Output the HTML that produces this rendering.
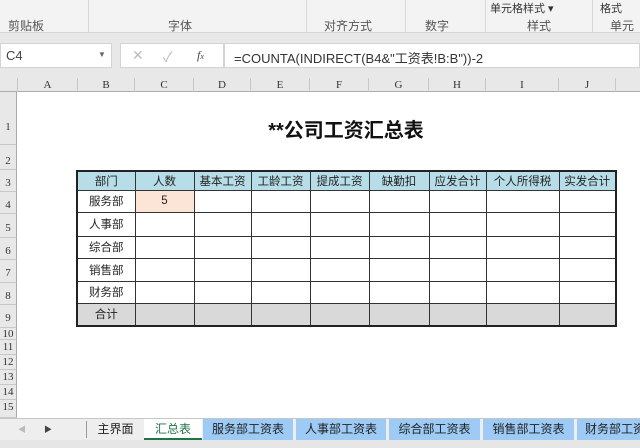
<!DOCTYPE html><html><head><meta charset="utf-8"><style>
*{margin:0;padding:0;box-sizing:border-box}
body{width:640px;height:448px;overflow:hidden;background:#fff;font-family:"Liberation Sans","Noto Sans CJK SC",sans-serif;position:relative}
.a{position:absolute}
.rib{left:0;top:0;width:640px;height:33px;background:#f3f3f3;border-bottom:1px solid #d6d6d6}
.rl{top:17px;font-size:12px;color:#555}
.band{left:0;top:33px;width:640px;height:45px;background:#e8e8e8}
.box{background:#fff;border:1px solid #d4d4d4}
.colh{left:0;top:78px;width:640px;height:14px;background:#e8e8e8;border-bottom:1px solid #ababab}
.ch{top:78px;height:14px;font:11px "Liberation Serif",serif;color:#333;text-align:center;line-height:14px;border-right:1px solid #c8c8c8}
.rh{left:0;width:17px;background:#e8e8e8;border-bottom:1px solid #c8c8c8;border-right:1px solid #ababab;font:11px "Liberation Serif",serif;color:#333;text-align:center}
table{position:absolute;left:76px;top:170px;border-collapse:collapse;font-size:11.5px;color:#222;border:2px solid #222}
td{border:1px solid #333;text-align:center;padding:0}
tr.h td{background:#b7dee8;height:19px}
.tabs{left:0;top:418px;width:640px;height:22px;background:#eeeeee;border-top:1px solid #c6c6c6}
.tab{top:419px;height:21px;font-size:12px;line-height:21px;text-align:center;color:#222}
</style></head><body>
<div class="a rib"></div>
<div class="a rl" style="left:8px">剪贴板</div>
<div class="a rl" style="left:168px">字体</div>
<div class="a rl" style="left:324px">对齐方式</div>
<div class="a rl" style="left:425px">数字</div>
<div class="a rl" style="left:527px">样式</div>
<div class="a rl" style="left:610px">单元格</div>
<div class="a" style="left:88px;top:0;width:1px;height:32px;background:#d8d8d8"></div>
<div class="a" style="left:306px;top:0;width:1px;height:32px;background:#d8d8d8"></div>
<div class="a" style="left:405px;top:0;width:1px;height:32px;background:#d8d8d8"></div>
<div class="a" style="left:485px;top:0;width:1px;height:32px;background:#d8d8d8"></div>
<div class="a" style="left:592px;top:0;width:1px;height:32px;background:#d8d8d8"></div>
<div class="a" style="left:490px;top:0;font-size:11px;color:#333">单元格样式 ▾</div>
<div class="a" style="left:600px;top:0;font-size:11px;color:#333">格式</div>
<div class="a band"></div>
<div class="a box" style="left:0;top:43px;width:112px;height:25px"></div>
<div class="a" style="left:6px;top:48px;font-size:13px;color:#444">C4</div>
<div class="a" style="left:98px;top:50px;font-size:8px;color:#666">▼</div>
<div class="a box" style="left:120px;top:43px;width:104px;height:25px"></div>
<div class="a" style="left:132px;top:47px;font-size:14px;color:#bbb">✕</div>
<div class="a" style="left:163px;top:47px;font-size:14px;color:#bbb">✓</div>
<div class="a" style="left:197px;top:48px;font:italic 12px 'Liberation Serif',serif;color:#444">f<span style="font-size:8px">x</span></div>
<div class="a box" style="left:224px;top:43px;width:416px;height:25px"></div>
<div class="a" style="left:234px;top:48px;font-size:13px;color:#333">=COUNTA(INDIRECT(B4&amp;"工资表!B:B"))-2</div>
<div class="a colh"></div>
<div class="a ch" style="left:0;width:18px"></div>
<div class="a ch" style="left:18px;width:60px">A</div>
<div class="a ch" style="left:78px;width:57px">B</div>
<div class="a ch" style="left:135px;width:59px">C</div>
<div class="a ch" style="left:194px;width:57px">D</div>
<div class="a ch" style="left:251px;width:59px">E</div>
<div class="a ch" style="left:310px;width:59px">F</div>
<div class="a ch" style="left:369px;width:60px">G</div>
<div class="a ch" style="left:429px;width:57px">H</div>
<div class="a ch" style="left:486px;width:73px">I</div>
<div class="a ch" style="left:559px;width:57px">J</div>
<div class="a ch" style="left:616px;width:30px"></div>
<div class="a rh" style="top:92px;height:53px;line-height:70px">1</div>
<div class="a rh" style="top:145px;height:25px;line-height:32px">2</div>
<div class="a rh" style="top:170px;height:22px;line-height:26px">3</div>
<div class="a rh" style="top:192px;height:22px;line-height:26px">4</div>
<div class="a rh" style="top:214px;height:24px;line-height:28px">5</div>
<div class="a rh" style="top:238px;height:22px;line-height:26px">6</div>
<div class="a rh" style="top:260px;height:23px;line-height:27px">7</div>
<div class="a rh" style="top:283px;height:22px;line-height:26px">8</div>
<div class="a rh" style="top:305px;height:23px;line-height:27px">9</div>
<div class="a rh" style="top:328px;height:12px;line-height:12px">10</div>
<div class="a rh" style="top:340px;height:15px;line-height:15px">11</div>
<div class="a rh" style="top:355px;height:15px;line-height:15px">12</div>
<div class="a rh" style="top:370px;height:15px;line-height:15px">13</div>
<div class="a rh" style="top:385px;height:15px;line-height:15px">14</div>
<div class="a rh" style="top:400px;height:18px;line-height:15px">15</div>
<div class="a" style="left:0;top:114px;width:640px;text-align:center;padding-left:52px;font-size:20px;font-weight:bold;color:#111">**公司工资汇总表</div>
<table>
<colgroup><col style="width:58px"><col style="width:59px"><col style="width:57px"><col style="width:59px"><col style="width:59px"><col style="width:60px"><col style="width:57px"><col style="width:73px"><col style="width:57px"></colgroup>
<tr class="h"><td>部门</td><td>人数</td><td>基本工资</td><td>工龄工资</td><td>提成工资</td><td>缺勤扣</td><td>应发合计</td><td>个人所得税</td><td>实发合计</td></tr>
<tr style="height:22px"><td>服务部</td><td style="background:#fce4d6">5</td><td></td><td></td><td></td><td></td><td></td><td></td><td></td></tr>
<tr style="height:24px"><td>人事部</td><td></td><td></td><td></td><td></td><td></td><td></td><td></td><td></td></tr>
<tr style="height:22px"><td>综合部</td><td></td><td></td><td></td><td></td><td></td><td></td><td></td><td></td></tr>
<tr style="height:23px"><td>销售部</td><td></td><td></td><td></td><td></td><td></td><td></td><td></td><td></td></tr>
<tr style="height:22px"><td>财务部</td><td></td><td></td><td></td><td></td><td></td><td></td><td></td><td></td></tr>
<tr style="height:23px;background:#d9d9d9"><td>合计</td><td></td><td></td><td></td><td></td><td></td><td></td><td></td><td></td></tr>
</table>
<div class="a tabs"></div>
<div class="a" style="left:18px;top:424px;font-size:8px;color:#bbb">◀</div>
<div class="a" style="left:44px;top:424px;font-size:8px;color:#444">▶</div>
<div class="a" style="left:86px;top:421px;width:1px;height:17px;background:#999"></div>
<div class="a tab" style="left:88px;width:55px">主界面</div>
<div class="a tab" style="left:144px;width:58px;background:#fff;color:#217346;border-bottom:2px solid #217346">汇总表</div>
<div class="a tab" style="left:203px;width:90px;background:#9dcbf6">服务部工资表</div>
<div class="a tab" style="left:296px;width:90px;background:#9dcbf6">人事部工资表</div>
<div class="a tab" style="left:389px;width:91px;background:#9dcbf6">综合部工资表</div>
<div class="a tab" style="left:483px;width:91px;background:#9dcbf6">销售部工资表</div>
<div class="a tab" style="left:577px;width:70px;background:#9dcbf6;text-align:left;padding-left:8px;white-space:nowrap;overflow:hidden">财务部工资表</div>
<div class="a" style="left:0;top:440px;width:640px;height:8px;background:#e6e6e6"></div>
</body></html>
